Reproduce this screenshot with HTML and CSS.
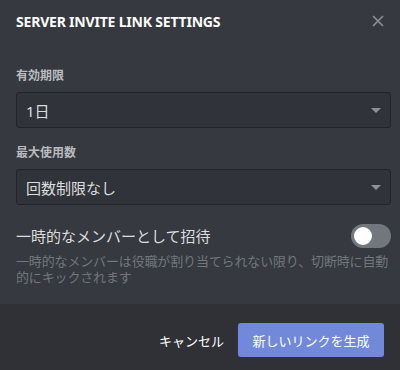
FILE: index.html
```html
<!DOCTYPE html>
<html lang="ja">
<head>
    <meta charset="UTF-8">
    <meta name="viewport" content="width=device-width, initial-scale=1.0">
    <title>Server Invite Link Settings</title>
    <link rel="stylesheet" href="styles.css">
</head>
<body>
    <div class="modal">
        <div class="modal-header">
            <div class="modal-title">Server Invite Link Settings</div>
            <div class="close">
                <svg width="12" height="12" viewBox="0 0 12 12">
                    <path d="M1 1L11 11M11 1L1 11" stroke="#8e9297" stroke-width="1.6" fill="none"/>
                </svg>
            </div>
        </div>

        <div class="modal-body">
            <div class="field-label">有効期限</div>
            <div class="select">
                <span>1日</span>
                <div class="arrow"></div>
            </div>

            <div class="field-label">最大使用数</div>
            <div class="select">
                <span>回数制限なし</span>
                <div class="arrow"></div>
            </div>

            <div class="toggle-row">
                <div class="toggle-label">一時的なメンバーとして招待</div>
                <div class="switch"><div class="knob"></div></div>
            </div>
            <div class="note">一時的なメンバーは役職が割り当てられない限り、切断時に自動的にキックされます</div>
        </div>

        <div class="modal-footer">
            <button class="btn-link">キャンセル</button>
            <button class="btn-primary">新しいリンクを生成</button>
        </div>
    </div>
</body>
</html>
```

FILE: styles.css
```css
body {
    margin: 0;
    background-color: #36393f;
    font-family: "Noto Sans", "Noto Sans CJK JP", sans-serif;
}

.modal {
    width: 400px;
    height: 370px;
    display: flex;
    flex-direction: column;
    background-color: #36393f;
}

.modal-header {
    display: flex;
    justify-content: space-between;
    align-items: center;
    padding: 12px 16px 0 16px;
    height: 20px;
}

.modal-title {
    color: #fff;
    font-size: 14px;
    font-weight: 700;
    text-transform: uppercase;
    line-height: 20px;
    letter-spacing: -0.2px;
}

.close {
    width: 12px;
    height: 12px;
    margin-top: -2px;
}

.close svg {
    display: block;
}

.modal-body {
    padding: 36px 9px 0 16px;
}

.field-label {
    color: #b9bbbe;
    font-size: 12px;
    font-weight: 700;
    line-height: 16px;
    margin-bottom: 8px;
}

.select {
    height: 34px;
    border: 1px solid #222428;
    border-radius: 3px;
    background-color: #303339;
    display: flex;
    align-items: center;
    justify-content: space-between;
    padding: 0 9px;
    color: #dcddde;
    font-size: 15px;
    margin-bottom: 17px;
}

.arrow {
    width: 0;
    height: 0;
    border-left: 5px solid transparent;
    border-right: 5px solid transparent;
    border-top: 5px solid #8e9297;
}

.toggle-row {
    display: flex;
    justify-content: space-between;
    align-items: center;
    margin-top: 19px;
    height: 24px;
}

.toggle-label {
    color: #dcddde;
    font-size: 15px;
    line-height: 20px;
}

.switch {
    width: 40px;
    height: 24px;
    border-radius: 12px;
    background-color: #72767d;
    position: relative;
}

.knob {
    position: absolute;
    left: 3px;
    top: 3px;
    width: 18px;
    height: 18px;
    border-radius: 50%;
    background-color: #fff;
}

.note {
    margin-top: 5px;
    color: #72767d;
    font-size: 13px;
    line-height: 16px;
    letter-spacing: -0.15px;
}

.modal-footer {
    margin-top: auto;
    background-color: #2f3136;
    display: flex;
    justify-content: flex-end;
    align-items: center;
    gap: 14px;
    padding: 19px 16px 13px 16px;
}

.modal-footer button {
    font-family: "Noto Sans", "Noto Sans CJK JP", sans-serif;
    font-size: 13px;
    border: none;
    cursor: pointer;
}

.btn-link {
    background: none;
    color: #fff;
    padding: 0;
    height: 34px;
}

.btn-primary {
    background-color: #7289da;
    color: #fff;
    border-radius: 3px;
    width: 146px;
    height: 34px;
}
```
